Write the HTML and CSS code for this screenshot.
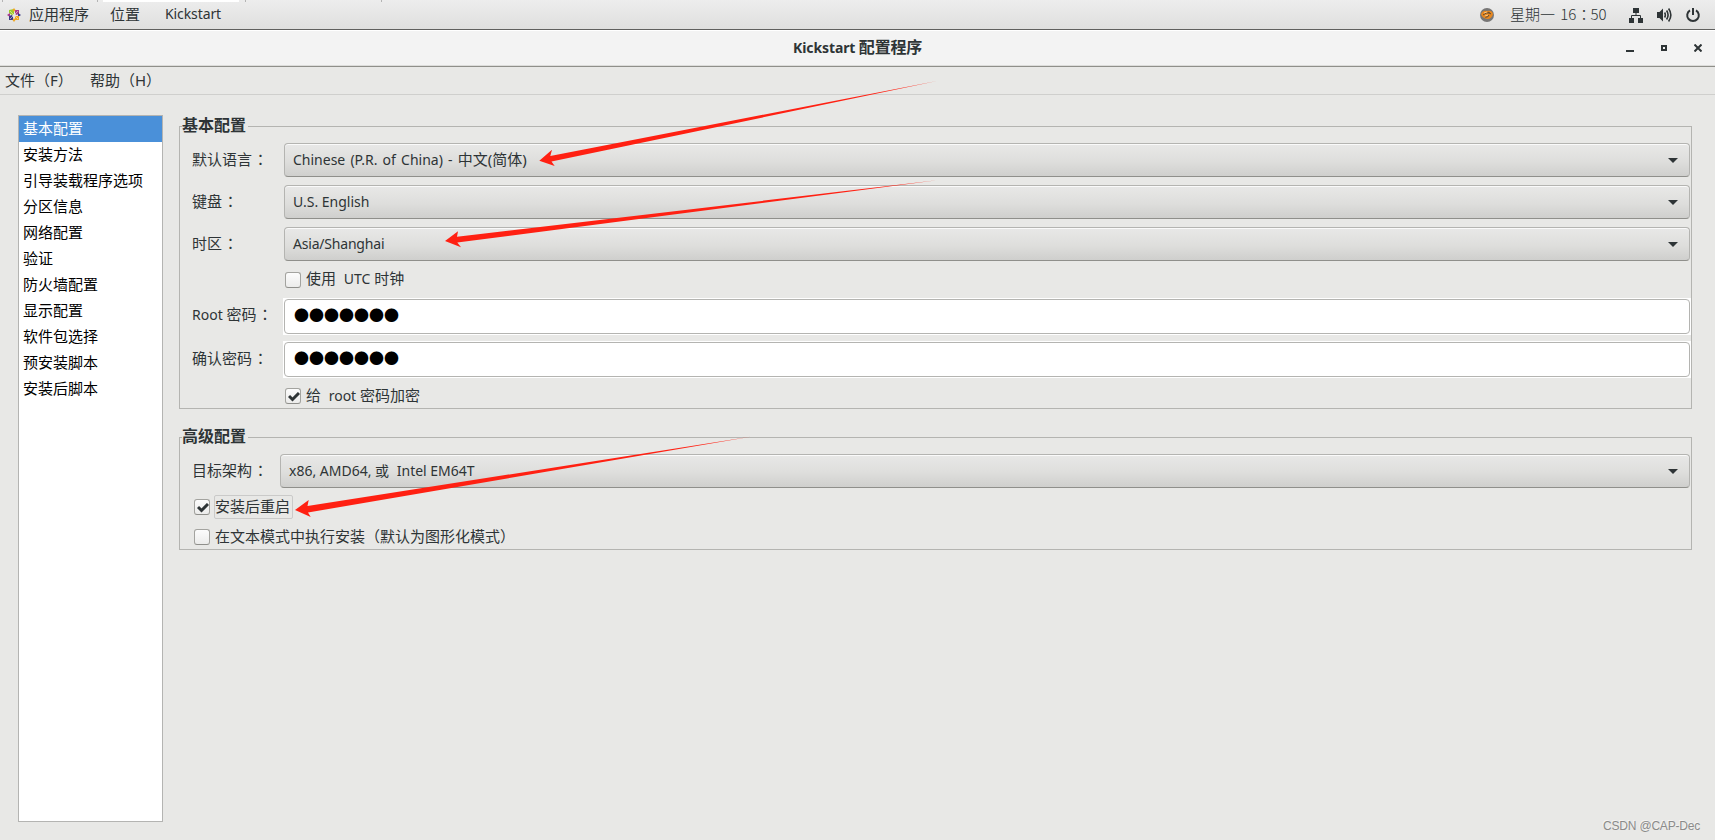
FILE: index.html
```html
<!DOCTYPE html>
<html lang="zh-CN">
<head>
  <meta charset="UTF-8">
  <title>Kickstart 配置程序</title>
  <link rel="stylesheet" href="styles.css">
</head>
<body>
  <header class="panel">
    <div class="tabs-edge"><i></i><i class="open"></i><i></i></div>
    <svg class="app-icon" width="14" height="14" viewBox="0 0 14 14">
      <path fill="#9ccd2a" d="M2 2l5-1v5l-2 1-3-2z"/>
      <path fill="#a8398c" d="M8 2h4v4l-3 1-1-2zM0 7l3-2v4z"/>
      <path fill="#3b3a86" d="M2 8l3-1 1 2v3H2zM14 7l-3-2v4z"/>
      <path fill="#efa724" d="M8 8h4v4H8zM7 0l1.500 2L7 4 5.500 2zM7 14l-1.500-2L7 10l1.500 2z"/>
      <path stroke="#f4e6d0" stroke-width=".6" d="M3 3l8 8M11 3l-8 8"/>
    </svg>
    <span class="apps">应用程序</span>
    <span class="places">位置</span>
    <span class="app-name">Kickstart</span>
    <div class="tray">
      <svg class="ball" width="14" height="14" viewBox="0 0 14 14">
        <circle cx="7" cy="7" r="7" fill="#777675"/>
        <path fill="#e8871e" d="M1 6q2-4 6-3 5-1 6 3-1 5-6 5-5-1-6-5z"/>
        <path fill="none" stroke="#5f4a32" d="M3 7q3-3 7-2M5 9q3 1 4-2M8 4l3 2"/>
        <path fill="none" stroke="#ffd9a0" stroke-width=".8" d="M4 5l3-1M5 8l3-1"/>
      </svg>
      <span class="clock">星期一 16<span class="colon">：</span>50</span>
      <svg class="net" width="16" height="16" viewBox="0 0 16 16">
        <path fill="#2e3436" d="M5 1h6v5H5zM1 11h5v5H1zM10 11h5v5h-5z"/>
        <path fill="none" stroke="#2e3436" d="M8 6v3M3.500 11V8.500h9V11"/>
      </svg>
      <svg class="vol" width="16" height="16" viewBox="0 0 16 16">
        <path fill="#2e3436" d="M1 5h2.500L7 1.500v13L3.500 11H1z"/>
        <path fill="none" stroke="#2e3436" stroke-width="1.600" d="M8.600 5.500q1.500 2.500 0 5M10.600 3.500q3 4.500 0 9M12.600 1.500q4.500 6.500 0 13"/>
      </svg>
      <svg class="power" width="16" height="16" viewBox="0 0 16 16">
        <path fill="none" stroke="#2e3436" stroke-width="2" d="M5 3.300a5.800 5.800 0 1 0 6 0M8 1v7"/>
      </svg>
    </div>
  </header>

  <div class="titlebar">
    <h1>Kickstart <span class="zh">配置程序</span></h1>
    <div class="win-buttons">
      <svg width="8" height="8" viewBox="0 0 8 8"><path fill="#2e3436" d="M0 6h8v2H0z"/></svg>
      <svg width="6" height="6" viewBox="0 0 6 6"><path fill="none" stroke="#2e3436" stroke-width="2" d="M1 1h4v4H1z"/></svg>
      <svg width="8" height="8" viewBox="0 0 8 8"><path stroke="#2e3436" stroke-width="2" d="M.5.5l7 7M7.500.5l-7 7"/></svg>
    </div>
  </div>

  <nav class="menubar">
    <span>文件（F）</span>
    <span>帮助（H）</span>
  </nav>

  <div class="content">
    <ul class="sections">
      <li class="selected">基本配置</li>
      <li>安装方法</li>
      <li>引导装载程序选项</li>
      <li>分区信息</li>
      <li>网络配置</li>
      <li>验证</li>
      <li>防火墙配置</li>
      <li>显示配置</li>
      <li>软件包选择</li>
      <li>预安装脚本</li>
      <li>安装后脚本</li>
    </ul>

    <main>
      <fieldset class="basic">
        <legend>基本配置</legend>
        <div class="row">
          <label>默认语言<span class="colon">：</span></label>
          <div class="combo"><span class="lang">Chinese (P.R. of China) - <span class="zh">中文(简体)</span></span><svg class="arrow" width="10" height="5" viewBox="0 0 10 5"><path d="M0 0h10L5 5z"/></svg></div>
        </div>
        <div class="row">
          <label>键盘<span class="colon">：</span></label>
          <div class="combo"><span>U.S. English</span><svg class="arrow" width="10" height="5" viewBox="0 0 10 5"><path d="M0 0h10L5 5z"/></svg></div>
        </div>
        <div class="row">
          <label>时区<span class="colon">：</span></label>
          <div class="combo"><span class="zone">Asia/Shanghai</span><svg class="arrow" width="10" height="5" viewBox="0 0 10 5"><path d="M0 0h10L5 5z"/></svg></div>
        </div>
        <div class="check-row utc">
          <span class="box"></span><span class="text">使用<span class="en"> UTC</span> 时钟</span>
        </div>
        <div class="row entry-row">
          <label><span class="en-start">Root</span> 密码<span class="colon">：</span></label>
          <div class="entry"><div class="field">●●●●●●●</div></div>
        </div>
        <div class="row entry-row">
          <label>确认密码<span class="colon">：</span></label>
          <div class="entry"><div class="field">●●●●●●●</div></div>
        </div>
        <div class="check-row encrypt">
          <span class="box"><svg width="12" height="10" viewBox="0 0 12 10"><path d="M1 4l3.500 3.500L11 1"/></svg></span><span class="text">给<span class="en"> root</span> 密码加密</span>
        </div>
      </fieldset>

      <fieldset class="advanced">
        <legend>高级配置</legend>
        <div class="row">
          <label>目标架构<span class="colon">：</span></label>
          <div class="combo"><span class="arch">x86, AMD64, 或<span class="en"> Intel EM64T</span></span><svg class="arrow" width="10" height="5" viewBox="0 0 10 5"><path d="M0 0h10L5 5z"/></svg></div>
        </div>
        <div class="check-row reboot">
          <span class="box"><svg width="12" height="10" viewBox="0 0 12 10"><path d="M1 4l3.500 3.500L11 1"/></svg></span><span class="focus">安装后重启</span>
        </div>
        <div class="check-row text-mode">
          <span class="box"></span><span class="text">在文本模式中执行安装（默认为图形化模式）</span>
        </div>
      </fieldset>
    </main>
  </div>

  <!-- 标注箭头 -->
  <svg class="marks" width="1715" height="840" viewBox="0 0 1715 840">
    <path d="M539.300 160.700L552 149.700L550.300 156L937 81L551.500 161.500L554.700 166z"/>
    <path d="M445 241L458 231.300L457 236.700L937 180.300L457.300 242.500L461 247.300z"/>
    <path d="M295 510L308.700 500L307.500 506L752 436.500L308 512.500L310.700 517z"/>
  </svg>
  <div class="watermark">CSDN @CAP-Dec</div>
</body>
</html>
```
FILE: styles.css
```css
* {
  box-sizing: border-box;
}

body {
  margin: 0;
  width: 1715px;
  height: 840px;
  overflow: hidden;
  position: relative;
  background: #e8e8e6;
  color: #2e3436;
  font-family: "Noto Sans", "Noto Sans CJK SC", sans-serif;
  font-size: 15px;
  line-height: 20px;
  white-space: nowrap;
}

svg {
  display: block;
  flex: none;
}

/* full-width colon, centred in its cell */
.colon {
  margin-left: 1px;
  font-family: "Noto Sans CJK TC", sans-serif;
  font-feature-settings: "locl" 0;
}

/* top panel */
.panel {
  position: relative;
  display: flex;
  align-items: center;
  height: 30px;
  padding: 0 0 1px 7px;
  background: linear-gradient(#ededed, #dfdfde);
  border-bottom: 1px solid #60605e;
}

.tabs-edge {
  position: absolute;
  left: 2px;
  top: 0;
  display: flex;
  height: 2px;
}

.tabs-edge i {
  width: 96px;
  border: solid #b4b4b4;
  border-width: 0 1px;
}

.tabs-edge .open {
  width: 136px;
  margin: 0 6px 0 5px;
  border: 0;
  background: #fff;
}

.tabs-edge i:last-child {
  width: 137px;
}

.app-icon {
  position: relative;
  top: 1px;
}

.apps {
  margin-left: 8px;
  width: 81px;
}

.places {
  width: 55px;
}

.app-name {
  font-size: 14px;
  letter-spacing: -0.1px;
}

.tray {
  display: flex;
  align-items: center;
  margin-left: auto;
  padding: 1px 14px 0 0;
}

.clock {
  width: 98px;
  margin: -2px 20px 0 16px;
  font-family: "Noto Sans CJK SC", sans-serif;
  font-weight: 300;
  word-spacing: 2px;
}

.clock .colon {
  margin: 0 -1px 0 0;
}

.vol {
  margin: 0 13px 0 12px;
}

/* window title */
.titlebar {
  display: flex;
  align-items: center;
  height: 37px;
  background: #f3f3f3;
  border-bottom: 1px solid #8f8f8a;
  box-shadow: inset 0 1px #fff, inset 0 -1px #dcdcda;
}

h1 {
  width: 130px;
  margin: 0 0 2px 793px;
  font-size: 14px;
  font-weight: 700;
  letter-spacing: -0.1px;
}

h1 .zh {
  font-size: 16px;
  letter-spacing: -0.2px;
}

.win-buttons {
  display: flex;
  align-items: center;
  gap: 27px;
  margin-left: auto;
  padding-right: 13px;
}

/* menu */
.menubar {
  display: flex;
  height: 28px;
  padding: 3px 0 0 5px;
  border-bottom: 1px solid #cfcfcd;
}

.menubar span {
  width: 85px;
}

.content {
  display: flex;
  padding: 20px 23px 0 18px;
}

.sections {
  width: 145px;
  height: 707px;
  margin: 0 16px 0 0;
  padding: 0;
  list-style: none;
  background: #fff;
  border: 1px solid #b4b4b2;
  color: #000;
}

.sections li {
  height: 26px;
  padding-left: 4px;
  line-height: 24px;
}

.sections .selected {
  background: #4a90d9;
  color: #fff;
}

main {
  flex: 1;
  padding-top: 1px;
}

/* frames */
fieldset {
  min-width: 0;
  margin: 0;
  padding: 6px 0 0;
  border: 1px solid #b4b4b1;
}

.basic {
  height: 293px;
  margin-bottom: 18px;
}

.advanced {
  height: 123px;
}

legend {
  height: 21px;
  margin-left: 2px;
  padding: 0 2px 0 0;
  font-size: 16px;
  font-weight: 700;
  line-height: 19px;
}

.row {
  display: flex;
  align-items: center;
  height: 34px;
  margin-bottom: 8px;
  padding: 0 1px 0 12px;
}

label {
  width: 92px;
  padding-bottom: 3px;
}

.advanced label {
  width: 88px;
}

.combo {
  flex: 1;
  display: flex;
  align-items: center;
  justify-content: space-between;
  height: 34px;
  padding: 0 11px 0 8px;
  border: 1px solid #b4b4b1;
  border-bottom-color: #8f8f8b;
  border-radius: 4px;
  background: linear-gradient(#e8e8e7, #dededc 55%, #cfcfcd);
  box-shadow: inset 0 1px #fafafa;
  font-size: 14px;
}

.combo span {
  padding-bottom: 1px;
}

.lang {
  word-spacing: 1.500px;
}

.lang .zh {
  font-size: 15px;
}

.zone {
  letter-spacing: -0.2px;
}

.arrow path {
  fill: #2e3436;
}

.check-row {
  display: flex;
  align-items: center;
}

.check-row .text {
  padding-bottom: 2px;
}

.box {
  width: 16px;
  height: 16px;
  margin-right: 5px;
  padding: 3px 0 0 2px;
  border: 1px solid #a3a39f;
  border-bottom-color: #8f8f8b;
  border-radius: 3px;
  background: linear-gradient(#fcfcfc, #ececeb);
}

.box path {
  fill: none;
  stroke: #2e3436;
  stroke-width: 3;
}

.en {
  margin-left: 4px;
  font-size: 14px;
}

.en-start {
  font-size: 14px;
}

.utc {
  height: 37px;
  margin-top: -8px;
  padding-left: 105px;
}

.entry-row {
  height: 37px;
  margin-bottom: 6px;
  padding: 0 0 0 12px;
}

.entry-row label {
  width: 91px;
  padding-bottom: 4px;
}

.entry {
  flex: 1;
  height: 37px;
  padding: 1px;
  background: #fff;
}

.field {
  height: 35px;
  padding-left: 9px;
  border: 1px solid #b4b4b1;
  border-radius: 4px;
  color: #000;
  font-family: "Noto Sans CJK SC", sans-serif;
  line-height: 30px;
}

.encrypt {
  height: 30px;
  margin-top: -6px;
  padding: 6px 0 0 105px;
}

.reboot {
  height: 24px;
  margin-top: -1px;
  padding-left: 14px;
}

.reboot .box {
  margin-right: 4px;
}

.focus {
  height: 24px;
  padding: 0 2px 0 0;
  border: 1px solid #cacac9;
  border-radius: 2px;
  line-height: 20px;
}

.text-mode {
  height: 24px;
  margin-top: 6px;
  padding-left: 14px;
}

.marks {
  position: absolute;
  left: 0;
  top: 0;
  fill: #ff2012;
}

.watermark {
  position: absolute;
  right: 15px;
  bottom: 5px;
  color: #8b8b8a;
  font: 12px/18px "Liberation Sans", sans-serif;
  letter-spacing: -0.2px;
  text-shadow: -1px -1px #f4f4f3;
}
```
